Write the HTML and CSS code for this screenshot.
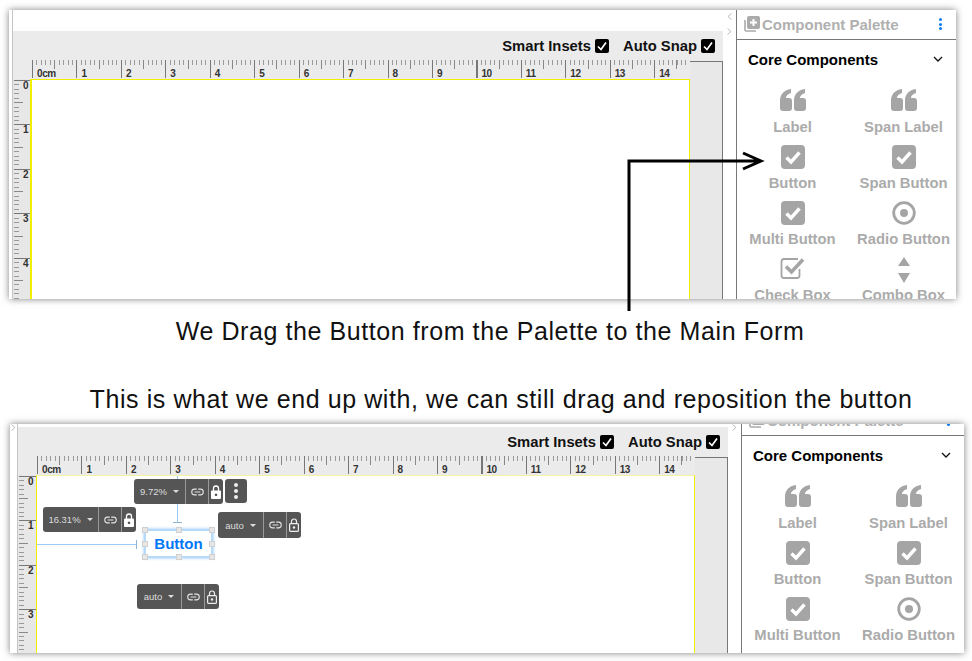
FILE: index.html
```html
<!doctype html>
<html lang="en">
  <head>
    <meta charset="UTF-8" />
    <meta name="viewport" content="width=device-width, initial-scale=1.0" />
    <title>Drag a button onto the form</title>
    <link rel="stylesheet" href="styles.css">
  </head>

  <body>
    <svg class="defs" aria-hidden="true">
      <symbol id="i-quote" viewBox="0 0 26 22">
        <path d="M0 12C0 5 4 1 11 0v4C7.500 5 6 7 6 9h3q3 0 3 3v7q0 3-3 3H3q-3 0-3-3z" />
        <path d="M14 12C14 5 18 1 25 0v4C21.500 5 20 7 20 9h3q3 0 3 3v7q0 3-3 3h-6q-3 0-3-3z" />
      </symbol>
      <symbol id="i-check" viewBox="0 0 24 24">
        <rect width="24" height="24" rx="4" />
        <path d="M5.500 12.500l4.500 4.500 8.500-9.500" fill="none" stroke="#fff" stroke-width="3.400" />
      </symbol>
      <symbol id="i-box" viewBox="0 0 14 14">
        <rect width="14" height="14" rx="2" fill="#000" />
        <path d="M3 7.500l3 3 5-7" fill="none" stroke="#fff" stroke-width="1.700" />
      </symbol>
      <symbol id="i-radio" viewBox="0 0 24 24">
        <circle cx="12" cy="12" r="10.300" fill="none" stroke="#a5a5a5" stroke-width="2.800" />
        <circle cx="12" cy="12" r="4" />
      </symbol>
      <symbol id="i-outline" viewBox="0 0 25 22">
        <path d="M18 2H4Q1.500 2 1.500 4.500v14Q1.500 21 4 21h13q2.500 0 2.500-2.500V12" fill="none" stroke="#a5a5a5" stroke-width="1.800" />
        <path d="M6 9.500l5.500 5.500L23 2.500" fill="none" stroke="#a5a5a5" stroke-width="3.600" />
      </symbol>
      <symbol id="i-updown" viewBox="0 0 12 26">
        <path d="M6 0l6 9H0zM0 16h12l-6 10z" />
      </symbol>
      <symbol id="i-add" viewBox="0 0 16 16">
        <path d="M1 4v10q0 1 1 1h10" fill="none" stroke="#ababab" stroke-width="1.600" />
        <path d="M5 0h9q2 0 2 2v9q0 2-2 2H5q-2 0-2-2V2q0-2 2-2zm3.500 3v2.500H6v2h2.500V10h2V7.500H13v-2h-2.500V3z" fill-rule="evenodd" />
      </symbol>
      <symbol id="i-link" viewBox="0 0 18 10">
        <path d="M8 1H5a4 4 0 0 0 0 8h3M10 1h3a4 4 0 0 1 0 8h-3M5 5h8" fill="none" stroke="#e4e4e4" stroke-width="1.500" />
      </symbol>
      <symbol id="i-lock" viewBox="0 0 10 14">
        <path d="M2.500 6V3.500a2.500 2.500 0 0 1 5 0V6" fill="none" stroke="#fff" stroke-width="1.300" />
        <path d="M1 5.500h8q1 0 1 1v6.500q0 1-1 1H1q-1 0-1-1V6.500q0-1 1-1zM5 8.500a1.300 1.300 0 1 0 .01 0z" fill="#fff" fill-rule="evenodd" />
      </symbol>
      <symbol id="i-unlock" viewBox="0 0 10 14">
        <path d="M2.500 5V3.500a2.500 2.500 0 0 1 5 0V5" fill="none" stroke="#eee" stroke-width="1.200" />
        <rect x=".6" y="5.600" width="8.800" height="7.800" rx="1" fill="none" stroke="#eee" stroke-width="1.200" />
        <circle cx="5" cy="9.500" r="1.200" fill="#eee" />
      </symbol>
      <symbol id="i-left" viewBox="0 0 5 7">
        <path d="M4.500 .5L1 3.500l3.500 3" fill="none" stroke="#bbb" />
      </symbol>
      <symbol id="i-right" viewBox="0 0 5 7">
        <path d="M.5 .5L4 3.500l-3.500 3" fill="none" stroke="#bbb" />
      </symbol>
    </svg>

    <div class="page">
      <section class="shot shot-first">
        <div class="editor">
          <div class="strip"></div>
          <div class="main">
            <div class="topbar"></div>
            <div class="toolbar">
              <span class="toggle">Smart Insets <svg class="box"><use href="#i-box" /></svg></span>
              <span class="toggle">Auto Snap <svg class="box"><use href="#i-box" /></svg></span>
            </div>
            <div class="workspace">
              <div class="corner"></div>
              <div class="hruler">
                <span>0cm</span><span>1</span><span>2</span><span>3</span><span>4</span><span>5</span><span>6</span><span>7</span><span>8</span><span>9</span><span>10</span><span>11</span><span>12</span><span>13</span><span>14</span>
              </div>
              <div class="spare"></div>
              <div class="vruler">
                <span>0</span><span>1</span><span>2</span><span>3</span><span>4</span>
              </div>
              <div class="canvas"></div>
            </div>
          </div>
          <div class="gutter">
            <svg class="chev"><use href="#i-left" /></svg>
            <svg class="chev"><use href="#i-right" /></svg>
          </div>
          <aside class="palette">
            <div class="palette-head">
              <svg class="head-icon"><use href="#i-add" /></svg>
              <span class="head-title">Component Palette</span>
              <span class="kebab-blue"><i></i><i></i><i></i></span>
            </div>
            <div class="section-title">
              <span>Core Components</span>
              <svg class="caret-down" viewBox="0 0 10 6"><path d="M1 1l4 4 4-4" /></svg>
            </div>
            <div class="items">
              <div class="item"><svg class="ico ico-quote"><use href="#i-quote" /></svg><span>Label</span></div>
              <div class="item"><svg class="ico ico-quote"><use href="#i-quote" /></svg><span>Span Label</span></div>
              <div class="item"><svg class="ico"><use href="#i-check" /></svg><span>Button</span></div>
              <div class="item"><svg class="ico"><use href="#i-check" /></svg><span>Span Button</span></div>
              <div class="item"><svg class="ico"><use href="#i-check" /></svg><span>Multi Button</span></div>
              <div class="item"><svg class="ico"><use href="#i-radio" /></svg><span>Radio Button</span></div>
              <div class="item"><svg class="ico ico-outline"><use href="#i-outline" /></svg><span>Check Box</span></div>
              <div class="item"><svg class="ico ico-updown"><use href="#i-updown" /></svg><span>Combo Box</span></div>
            </div>
          </aside>
        </div>
      </section>

      <svg class="arrow" viewBox="0 0 140 155">
        <path d="M2 154V4h130M116 -4L134 4l-18 8" />
      </svg>

      <p class="caption caption-drag">We Drag the Button from the Palette to the Main Form</p>
      <p class="caption caption-result">This is what we end up with, we can still drag and reposition the button</p>

      <section class="shot shot-second">
        <div class="editor">
          <div class="strip"><svg class="chev"><use href="#i-right" /></svg></div>
          <div class="main">
            <div class="topbar"></div>
            <div class="toolbar">
              <span class="toggle">Smart Insets <svg class="box"><use href="#i-box" /></svg></span>
              <span class="toggle">Auto Snap <svg class="box"><use href="#i-box" /></svg></span>
            </div>
            <div class="workspace">
              <div class="corner"></div>
              <div class="hruler">
                <span>0cm</span><span>1</span><span>2</span><span>3</span><span>4</span><span>5</span><span>6</span><span>7</span><span>8</span><span>9</span><span>10</span><span>11</span><span>12</span><span>13</span><span>14</span>
              </div>
              <div class="spare"></div>
              <div class="vruler">
                <span>0</span><span>1</span><span>2</span><span>3</span>
              </div>
              <div class="canvas">
                <div class="guide guide-top"></div>
                <div class="guide guide-left"></div>

                <div class="pill pill-top">
                  <span class="seg-value">9.72% <i class="drop"></i></span>
                  <span class="seg-link"><svg><use href="#i-link" /></svg></span>
                  <span class="seg-lock"><svg><use href="#i-lock" /></svg></span>
                </div>
                <div class="pill pill-more"><i></i><i></i><i></i></div>
                <div class="pill pill-left">
                  <span class="seg-value">16.31% <i class="drop"></i></span>
                  <span class="seg-link"><svg><use href="#i-link" /></svg></span>
                  <span class="seg-lock"><svg><use href="#i-lock" /></svg></span>
                </div>
                <div class="pill pill-right">
                  <span class="seg-value">auto <i class="drop"></i></span>
                  <span class="seg-link"><svg><use href="#i-link" /></svg></span>
                  <span class="seg-lock"><svg><use href="#i-unlock" /></svg></span>
                </div>
                <div class="pill pill-bottom">
                  <span class="seg-value">auto <i class="drop"></i></span>
                  <span class="seg-link"><svg><use href="#i-link" /></svg></span>
                  <span class="seg-lock"><svg><use href="#i-unlock" /></svg></span>
                </div>

                <div class="dropped">
                  Button
                  <i class="handle h-tl"></i><i class="handle h-tc"></i><i class="handle h-tr"></i>
                  <i class="handle h-ml"></i><i class="handle h-mr"></i>
                  <i class="handle h-bl"></i><i class="handle h-bc"></i><i class="handle h-br"></i>
                </div>
              </div>
            </div>
          </div>
          <div class="gutter"><svg class="chev"><use href="#i-right" /></svg></div>
          <aside class="palette">
            <div class="palette-head">
              <svg class="head-icon"><use href="#i-add" /></svg>
              <span class="head-title">Component Palette</span>
              <span class="kebab-blue"><i></i><i></i><i></i></span>
            </div>
            <div class="section-title">
              <span>Core Components</span>
              <svg class="caret-down" viewBox="0 0 10 6"><path d="M1 1l4 4 4-4" /></svg>
            </div>
            <div class="items">
              <div class="item"><svg class="ico ico-quote"><use href="#i-quote" /></svg><span>Label</span></div>
              <div class="item"><svg class="ico ico-quote"><use href="#i-quote" /></svg><span>Span Label</span></div>
              <div class="item"><svg class="ico"><use href="#i-check" /></svg><span>Button</span></div>
              <div class="item"><svg class="ico"><use href="#i-check" /></svg><span>Span Button</span></div>
              <div class="item"><svg class="ico"><use href="#i-check" /></svg><span>Multi Button</span></div>
              <div class="item"><svg class="ico"><use href="#i-radio" /></svg><span>Radio Button</span></div>
            </div>
          </aside>
        </div>
      </section>
    </div>
  </body>
</html>
```

FILE: styles.css
```css
html,
body {
  margin: 0;
  height: 100%;
  overflow: hidden;
  background-color: #fff;
}

body {
  font-family: "Liberation Sans", Arial, sans-serif;
}

.defs {
  position: absolute;
  width: 0;
  height: 0;
}

.page {
  position: relative;
  padding-top: 10px;
}

/* the two screenshots */
.shot {
  overflow: hidden;
  background-color: #fff;
  box-shadow: 0 0 7px rgba(0, 0, 0, 0.5);
}

.shot-first {
  width: 947px;
  height: 289px;
  margin-left: 9px;
}

.shot-second {
  width: 954px;
  height: 229px;
  margin-left: 10px;
  margin-top: 9px;
}

.shot-second .editor {
  margin-top: -18px;
}

.editor {
  display: flex;
  height: 330px;
}

.strip {
  flex: none;
  width: 3px;
  border-right: 1px solid #c4c4c4;
}

.shot-second .strip {
  width: 7px;
  padding-top: 18px;
}

.shot-second .strip .chev {
  margin-left: 1px;
}

.chev {
  display: block;
  width: 5px;
  height: 7px;
}

.main {
  flex: none;
  display: flex;
  flex-direction: column;
  width: 710px;
}

.topbar {
  flex: none;
  height: 21px;
  background-color: #fff;
}

.toolbar {
  flex: none;
  display: flex;
  justify-content: flex-end;
  gap: 14px;
  height: 29px;
  padding-right: 8px;
  background-color: #ebebeb;
}

.toggle {
  display: flex;
  align-items: center;
  gap: 4px;
  height: 30px;
  font-size: 14.800px;
  font-weight: bold;
  color: #111;
}

.box {
  display: block;
  width: 14px;
  height: 14px;
}

.workspace {
  display: grid;
  grid-template-columns: 19px 658px 33px;
  grid-template-rows: 19px minmax(0, 1fr);
  flex: 1;
  min-height: 0;
  background-color: #ebebeb;
}

.corner {
  background-color: #ebebeb;
}

/* rulers */
.hruler {
  display: flex;
  overflow: hidden;
  background-image:
    repeating-linear-gradient(to right, #777 0 1px, transparent 1px 44.45px),
    repeating-linear-gradient(to right, transparent 0 22.2px, #888 22.2px 23.2px, transparent 23.2px 44.45px),
    repeating-linear-gradient(to right, #999 0 1px, transparent 1px 4.445px);
  background-size: 100% 18px, 100% 9px, 100% 5px;
  background-repeat: no-repeat;
}

.hruler span {
  flex: none;
  box-sizing: border-box;
  width: 44.45px;
  padding: 9px 0 0 5px;
  font-size: 10px;
  font-weight: bold;
  letter-spacing: -0.4px;
  line-height: 10px;
  color: #333;
}

.vruler {
  border-top: 1px solid transparent;
  overflow: hidden;
  background-color: #e7e7e7;
  background-image:
    repeating-linear-gradient(to bottom, #777 0 1px, transparent 1px 44.45px),
    repeating-linear-gradient(to bottom, transparent 0 22.2px, #888 22.2px 23.2px, transparent 23.2px 44.45px),
    repeating-linear-gradient(to bottom, #999 0 1px, transparent 1px 4.445px);
  background-size: 17px 100%, 9px 100%, 5px 100%;
  background-position: 1px 0;
  background-repeat: no-repeat;
}

.vruler span {
  display: block;
  box-sizing: border-box;
  height: 44.45px;
  padding: 1px 0 0 10px;
  font-size: 10px;
  font-weight: bold;
  line-height: 10px;
  color: #333;
}

.canvas {
  position: relative;
  grid-column: 2;
  grid-row: 2;
  border: 1px solid #f2ee00;
  border-bottom: none;
  margin-left: -1px;
  background-color: #fff;
}

.shot-first .canvas {
  margin-left: -2px;
  border-left-width: 2px;
}

.shot-second .canvas {
  border-top-color: #f6f3a0;
}

.spare {
  grid-column: 3;
  grid-row: 1 / span 2;
  margin-top: 1px;
  border-top: 1px solid #777;
  border-right: 1px solid #777;
  box-sizing: border-box;
  background-color: #e8e8e8;
}

.gutter {
  flex: none;
  display: flex;
  flex-direction: column;
  align-items: center;
  gap: 8px;
  width: 13px;
  padding-top: 3px;
  box-sizing: border-box;
}

.shot-second .gutter {
  padding-top: 18px;
}

/* palette on the right */
.palette {
  flex: 1;
  min-width: 0;
  overflow: hidden;
  border-left: 1px solid #777;
}

.palette-head {
  display: flex;
  align-items: center;
  height: 28px;
  padding-bottom: 1px;
  border-bottom: 1px solid #777;
  background-color: #fff;
}

.head-icon {
  width: 16px;
  height: 16px;
  margin-left: 7px;
  fill: #ababab;
}

.head-title {
  margin-left: 2px;
  font-size: 15px;
  font-weight: bold;
  color: #b0b0b0;
}

.kebab-blue {
  display: flex;
  flex-direction: column;
  gap: 1.500px;
  margin-left: auto;
  margin-right: 14px;
}

.kebab-blue i {
  width: 3px;
  height: 3px;
  border-radius: 50%;
  background-color: #0a7cf0;
}

.section-title {
  display: flex;
  align-items: center;
  justify-content: space-between;
  height: 38px;
  padding: 0 13px 2px 11px;
  font-size: 15px;
  font-weight: bold;
  color: #000;
}

.caret-down {
  width: 10px;
  height: 6px;
  fill: none;
  stroke: #111;
  stroke-width: 1.300;
}

.items {
  display: grid;
  grid-template-columns: 111px 111px;
  grid-auto-rows: 56px;
  padding-top: 9px;
}

.item {
  display: flex;
  flex-direction: column;
  align-items: center;
  font-size: 14.800px;
  font-weight: bold;
  line-height: 16px;
  white-space: nowrap;
  color: #ababab;
}

.ico {
  flex: none;
  width: 24px;
  height: 24px;
  margin-bottom: 6px;
  fill: #a5a5a5;
}

.ico-quote {
  width: 26px;
  height: 22px;
  margin-bottom: 8px;
}

.ico-outline {
  width: 25px;
  height: 22px;
  margin-bottom: 8px;
}

.ico-updown {
  width: 12px;
  height: 26px;
  margin-bottom: 4px;
}

/* big arrow over the first screenshot */
.arrow {
  position: absolute;
  left: 627px;
  top: 157px;
  width: 140px;
  height: 155px;
  overflow: visible;
  fill: none;
  stroke: #000;
  stroke-width: 3;
}

.caption {
  margin: 0;
  font-size: 25px;
  line-height: 32px;
  letter-spacing: 0.58px;
  text-align: center;
  color: #111;
}

.caption-drag {
  margin-top: 16px;
  padding-left: 8px;
}

.caption-result {
  margin-top: 36px;
  padding-left: 30px;
}

/* selection pills around the dropped button */
.pill {
  position: absolute;
  display: flex;
  align-items: stretch;
  height: 25px;
  border-radius: 3px;
  background-color: #555;
  font-size: 9.500px;
  color: #ddd;
}

.pill span {
  display: flex;
  align-items: center;
  justify-content: center;
}

.seg-value {
  flex: 1;
  gap: 6px;
}

.seg-link {
  width: 23px;
  border-left: 1px solid #999;
  box-sizing: border-box;
}

.seg-link svg {
  width: 13px;
  height: 8px;
}

.seg-lock {
  width: 15px;
  border-left: 1px solid #999;
  box-sizing: border-box;
}

.seg-lock svg {
  width: 10px;
  height: 14px;
}

.drop {
  width: 0;
  height: 0;
  border-left: 3px solid transparent;
  border-right: 3px solid transparent;
  border-top: 3px solid #ddd;
}

.pill-top {
  left: 97px;
  top: 3px;
  width: 89px;
}

.pill-more {
  left: 188px;
  top: 3px;
  width: 22px;
  height: 24px;
  flex-direction: column;
  align-items: center;
  justify-content: center;
  gap: 2px;
}

.pill-more i {
  width: 4px;
  height: 4px;
  border-radius: 50%;
  background-color: #eee;
}

.pill-left {
  left: 6px;
  top: 31px;
  width: 93px;
}

.pill-right {
  left: 181px;
  top: 36px;
  width: 83px;
  height: 26px;
}

.pill-bottom {
  left: 100px;
  top: 108px;
  width: 82px;
}

.guide {
  position: absolute;
  background-color: #9ccbf5;
}

.guide-top {
  left: 140px;
  top: 0;
  width: 1px;
  height: 47px;
}

.guide-top::after {
  content: "";
  position: absolute;
  left: -4px;
  bottom: 0;
  width: 9px;
  height: 1px;
  background-color: #8fb4d6;
}

.guide-left {
  left: 0;
  top: 68px;
  width: 100px;
  height: 1px;
}

.guide-left::after {
  content: "";
  position: absolute;
  right: 0;
  top: -4px;
  width: 1px;
  height: 9px;
  background-color: #8fb4d6;
}

.dropped {
  position: absolute;
  left: 107px;
  top: 53px;
  width: 65px;
  height: 25px;
  border: 2px solid #b5dafa;
  box-shadow: 0 0 3px #8ec5f5;
  background-color: #fff;
  font-size: 15px;
  font-weight: bold;
  line-height: 25px;
  text-align: center;
  color: #0078f5;
}

.handle {
  position: absolute;
  width: 6px;
  height: 6px;
  background-color: #e6e6e6;
  border: 1px solid #d0d0d0;
  box-sizing: border-box;
}

.h-tl { left: -4px; top: -4px; }
.h-tc { left: 30px; top: -4px; }
.h-tr { right: -4px; top: -4px; }
.h-ml { left: -4px; top: 10px; }
.h-mr { right: -4px; top: 10px; }
.h-bl { left: -4px; bottom: -4px; }
.h-bc { left: 30px; bottom: -4px; }
.h-br { right: -4px; bottom: -4px; }
```
